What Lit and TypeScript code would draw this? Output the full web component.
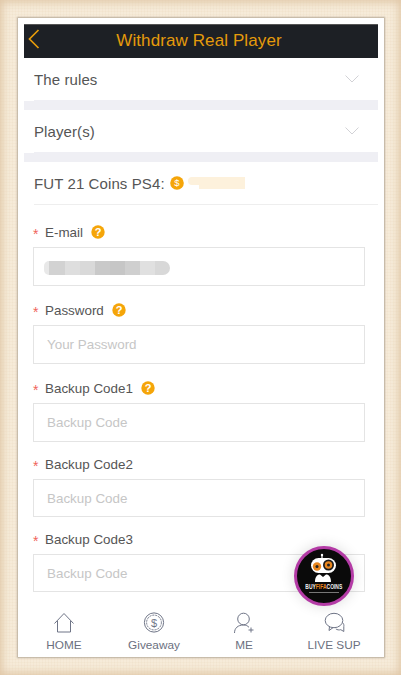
import { LitElement, html, css, svg } from "lit";
import { customElement } from "lit/decorators.js";

const help = html`<svg class="help" viewBox="0 0 14 14" width="14" height="14"><circle cx="7" cy="7" r="6.700" fill="#f5a509"/><text x="7" y="10.800" text-anchor="middle" font-size="11" font-weight="700" font-family="Liberation Sans, sans-serif" fill="#fff">?</text></svg>`;
const chevron = html`<svg class="chev" viewBox="0 0 14 8" width="14" height="8"><path d="M.5.5 7 7l6.500-6.500" fill="none" stroke="#d2d2d6" stroke-width="1"/></svg>`;

const tabIcons = {
  home: svg`<path d="M4.500 12.500 14 2.500l9.500 10M7.500 10v11h13V10" fill="none" stroke="#6f7587" stroke-width="1"/>`,
  give: svg`<circle cx="14" cy="11.500" r="9.600" fill="none" stroke="#6f7587" stroke-width="1"/><circle cx="14" cy="11.500" r="7.400" fill="none" stroke="#6f7587" stroke-width="1" stroke-dasharray="2 1"/><text x="14" y="15.500" text-anchor="middle" font-size="11" font-family="Liberation Sans, sans-serif" fill="#6f7587">$</text>`,
  me: svg`<circle cx="13.500" cy="8" r="5.800" fill="none" stroke="#6f7587" stroke-width="1"/><path d="M4.500 22c0-5 3.500-8 9-8 2.500 0 4 .8 5.500 2.300M18.500 19h5M21 16.500v5" fill="none" stroke="#6f7587" stroke-width="1"/>`,
  chat: svg`<ellipse cx="14" cy="9.500" rx="8.800" ry="7.200" fill="none" stroke="#6f7587" stroke-width="1"/><path d="M9.500 15.800 9 19.500l4-2.800M22.500 11.500c1.200 1.200 1.600 2.500 1.300 4v5l-3-1.800c-2 .5-3.500.2-5-.8" fill="none" stroke="#6f7587" stroke-width="1"/>`,
};

@customElement("app-root")
export class AppRoot extends LitElement {
  static styles = css`
    :host { display: block; width: 401px; height: 675px; overflow: hidden; position: relative; font-family: "Liberation Sans", Arial, sans-serif; }
    .page {
      box-sizing: border-box; width: 401px; height: 675px; padding: 18px 17px 18px 18px;
      background-color: #f6ebd9;
      background-image:
        repeating-linear-gradient(0deg, rgba(200,160,110,.05) 0 1px, transparent 1px 3px),
        repeating-linear-gradient(90deg, rgba(200,160,110,.05) 0 1px, transparent 1px 3px);
      box-shadow: inset 0 0 8px 2px #dfc5a4;
    }
    .card {
      box-sizing: border-box; height: 639px; background: #fff; padding: 6px 6px 0;
      box-shadow: 0 0 1.500px 1px #b9ad9c; display: flex; flex-direction: column; overflow: hidden;
    }
    header { flex: none; height: 34px; background: #1d2025; border-top: 1px solid #555; box-sizing: border-box; display: flex; align-items: center; justify-content: center; position: relative; padding-right: 4px; }
    header h1 { margin: 0; font-size: 17px; font-weight: 400; letter-spacing: .1px; color: #e59b0b; position: relative; top: -1px; }
    .back { position: absolute; left: 4px; top: 4px; }
    .scroll { flex: 1; min-height: 0; overflow: hidden; }
    .row { height: 43px; box-sizing: border-box; display: flex; align-items: center; justify-content: space-between; margin-left: 10px; padding: 0 19px 0 0; font-size: 15px; letter-spacing: .1px; color: #555; border-bottom: 1px solid #efeff4; }
    .gap { height: 9px; background: #efeff4; }
    .coins { justify-content: flex-start; height: 43px; padding: 0; border-bottom-color: #eee; gap: 5px; }
    .blur { display: flex; align-items: center; height: 12px; margin-left: -1px; margin-top: -1px; }
    .blur i { display: block; height: 12px; background: #fdf1dc; }
    .blur .a { width: 11px; height: 8px; border-radius: 5px 0 0 5px; margin-top: -4px; }
    .blur .b { width: 46px; }
    form { padding: 18px 13px 0 9px; display: flex; flex-direction: column; }
    .field { display: flex; flex-direction: column; }
    .label { height: 19px; display: flex; align-items: center; font-size: 13.400px; color: #555; margin-bottom: 5px; }
    .star { color: #f0645a; width: 12px; font-size: 14px; position: relative; top: 1px; }
    .help { margin-left: 8px; position: relative; top: -1px; }
    .input { height: 39px; box-sizing: border-box; border: 1px solid #e4e4e4; padding: 0 13px; display: flex; align-items: center; font-size: 13.400px; color: #c6c6c6; }
    .f1 { margin-bottom: 15px; }
    .f2 { margin-bottom: 13px; }
    .short .input { height: 38px; }
    .smear { display: flex; height: 14px; margin-left: -3px; margin-top: 3px; }
    .smear i { display: block; height: 100%; }
    .smear i:first-child { border-radius: 6px 0 0 6px; }
    .smear i:last-child { border-radius: 0 7px 7px 0; }
    nav { flex: none; height: 53px; display: grid; grid-template-columns: repeat(4, 90px); background: #fff; margin: 0 -6px; padding: 0 0 0 1px; }
    .tab { display: flex; flex-direction: column; align-items: center; font-size: 11.800px; color: #6b7080; line-height: 14px; padding-top: 7px; box-sizing: border-box; height: 47px; overflow: hidden; gap: 3px; }
    .tab svg { flex: none; }
    .fab { position: absolute; left: 294px; top: 546px; width: 60px; height: 60px; border-radius: 50%; box-sizing: border-box; border: 3px solid #b43ba6; background: #0a0a0a; box-shadow: 0 0 14px rgba(0,0,0,.14); display: flex; flex-direction: column; align-items: center; overflow: hidden; }
    .robot { flex: none; margin-top: 3px; }
    .brand { flex: none; font-size: 8px; line-height: 8px; color: #eee; white-space: nowrap; font-weight: 700; transform: scaleX(.62); }
    .brand b { color: #e8851c; }
    .tag { width: 30px; height: 1px; background: #777; margin-top: 1px; flex: none; }
  `;

  field(label: string, placeholder: string, hasHelp: boolean, cls: string) {
    return html`<div class="field ${cls}">
      <div class="label"><span class="star">*</span>${label}${hasHelp ? help : ""}</div>
      <div class="input">${placeholder}</div>
    </div>`;
  }

  render() {
    const smear = [["#e8e8e8", 5], ["#d2d2d2", 16], ["#dedede", 15], ["#d9d9d9", 15], ["#c9c9c9", 15], ["#c6c6c6", 15], ["#cfcfcf", 15], ["#e0e0e0", 15], ["#d8d8d8", 15]] as [string, number][];
    return html`<div class="page">
      <div class="card">
        <header>
          <svg class="back" width="12" height="20" viewBox="0 0 12 20"><path d="M10.500 1 1.500 10l9 9" fill="none" stroke="#e59b0b" stroke-width="1.700"/></svg>
          <h1>Withdraw Real Player</h1>
        </header>
        <div class="scroll">
          <div class="row">The rules${chevron}</div>
          <div class="gap"></div>
          <div class="row">Player(s)${chevron}</div>
          <div class="gap"></div>
          <div class="row coins">FUT 21 Coins PS4:
            <svg width="14" height="14" viewBox="0 0 14 14"><circle cx="7" cy="7" r="6.800" fill="#f5a509"/><text x="7" y="10.400" text-anchor="middle" font-size="9.500" font-family="Liberation Sans, sans-serif" fill="#fff">$</text></svg>
            <span class="blur"><i class="a"></i><i class="b"></i></span>
          </div>
          <form>
            <div class="field f1">
              <div class="label"><span class="star">*</span>E-mail${help}</div>
              <div class="input"><div class="smear">${smear.map(([c, w]) => html`<i style="background:${c};width:${w}px"></i>`)}</div></div>
            </div>
            ${this.field("Password", "Your Password", true, "f1")}
            ${this.field("Backup Code1", "Backup Code", true, "f2")}
            ${this.field("Backup Code2", "Backup Code", false, "f2 short")}
            ${this.field("Backup Code3", "Backup Code", false, "f2 short")}
          </form>
        </div>
        <nav>
          <div class="tab"><svg width="28" height="24" viewBox="0 0 28 24">${tabIcons.home}</svg>HOME</div>
          <div class="tab"><svg width="28" height="24" viewBox="0 0 28 24">${tabIcons.give}</svg>Giveaway</div>
          <div class="tab"><svg width="28" height="24" viewBox="0 0 28 24">${tabIcons.me}</svg>ME</div>
          <div class="tab"><svg width="28" height="24" viewBox="0 0 28 24">${tabIcons.chat}</svg>LIVE SUP</div>
        </nav>
      </div>
      <div class="fab">
        <svg class="robot" width="38" height="31" viewBox="0 0 38 31">
          <path d="M17 3v5" stroke="#fff" stroke-width="1.200"/><circle cx="17" cy="3" r="1.200" fill="#fff"/>
          <rect x="6" y="6" width="25" height="15" rx="7.500" fill="#fff"/>
          <circle cx="12" cy="14.500" r="4.200" fill="#e8851c"/><circle cx="12" cy="14.500" r="1.500" fill="#222"/>
          <circle cx="23.500" cy="13" r="5.500" fill="#1a1a1a"/><circle cx="23.500" cy="13" r="3.800" fill="#e8851c"/><circle cx="23.500" cy="13" r="1.500" fill="#222"/>
          <path d="M10 30c0-5 2-7.500 5-7.500l3 2.500 3-2.500c3 0 5 2.500 5 7.500z" fill="#fff"/>
        </svg>
        <div class="brand">BUY<b>FIFA</b>COINS</div>
        <div class="tag"></div>
      </div>
    </div>`;
  }
}
